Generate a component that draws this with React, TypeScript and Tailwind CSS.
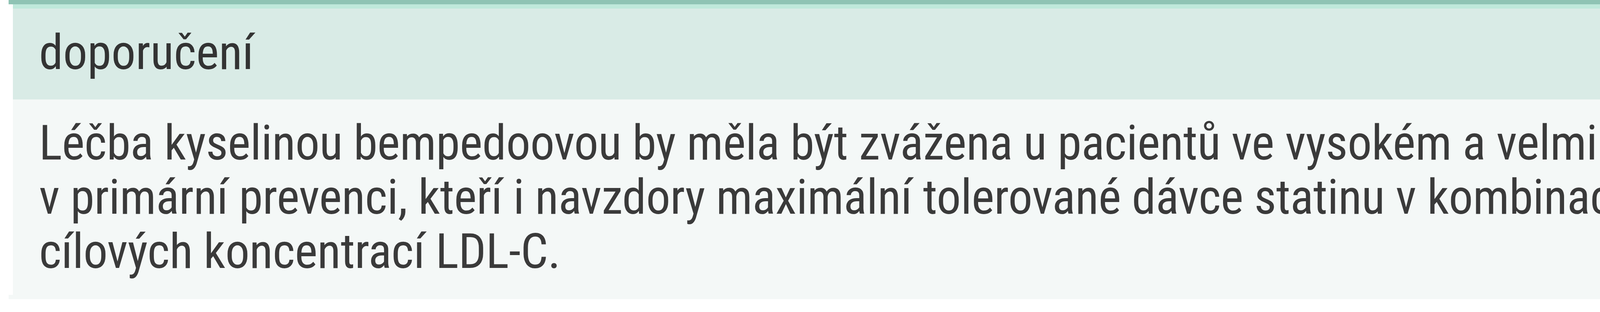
import React from "react";

const font = "[font-family:'Roboto_Condensed',Roboto,'Liberation_Sans',sans-serif]";

export default function App() {
  return (
    <div className={`h-[800px] w-full bg-white pl-[22px] ${font}`}>
      <div className="w-[7611px] border-t-[11px] border-b-[11px] border-t-[#8fc3b4] border-b-[#f4f8f7] bg-white px-[11px]">
        <div className="grid grid-cols-[5434px_1066px_1066px] gap-x-[11px]">
          <div className="flex h-[244px] items-center border-t-[11px] border-[#bfe8db] bg-[#d9ebe6] pb-[8px] pl-[67px] text-[124px] leading-[139px] text-[#333]">
            doporučení
          </div>
          <div className="flex h-[244px] items-center justify-center border-t-[11px] border-[#bfe8db] bg-[#d9ebe6] pb-[8px] text-[124px] leading-[139px] text-[#333]">
            třída doporučení
          </div>
          <div className="flex h-[244px] items-center justify-center border-t-[11px] border-[#bfe8db] bg-[#d9ebe6] pb-[8px] text-[124px] leading-[139px] text-[#333]">
            úroveň důkazů
          </div>

          <div className="flex h-[501px] items-center bg-[#f4f8f7] pl-[67px] pr-[20px] text-[124px] leading-[139px] tracking-[-0.5px] text-[#3a3a3a]">
            <p className="whitespace-nowrap">
              Léčba kyselinou bempedoovou by měla být zvážena u pacientů ve vysokém a velmi vysokém KV-riziku
              <br />
              v primární prevenci, kteří i navzdory maximální tolerované dávce statinu v kombinaci s ezetimibem nedosahují
              <br />
              cílových koncentrací LDL-C.
            </p>
          </div>
          <div className="flex h-[501px] items-center justify-center bg-[#f4f8f7] text-[124px] leading-[139px] text-[#3a3a3a]">
            IIb
          </div>
          <div className="flex h-[501px] items-center justify-center bg-[#f4f8f7] text-[124px] leading-[139px] text-[#3a3a3a]">
            C
          </div>
        </div>
      </div>
    </div>
  );
}
